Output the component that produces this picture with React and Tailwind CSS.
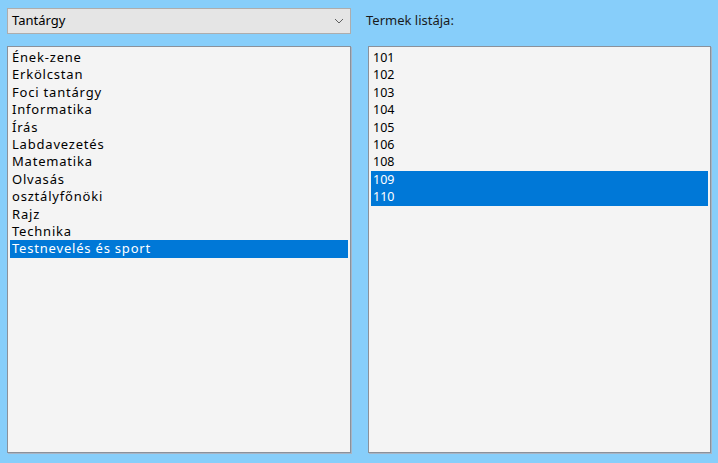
import React from "react";

const subjects = [
  "Ének-zene",
  "Erkölcstan",
  "Foci tantárgy",
  "Informatika",
  "Írás",
  "Labdavezetés",
  "Matematika",
  "Olvasás",
  "osztályfőnöki",
  "Rajz",
  "Technika",
  "Testnevelés és sport",
];

const rooms = ["101", "102", "103", "104", "105", "106", "108", "109", "110"];

function ListBox({ items, selected, wide }) {
  return (
    <div className="h-[407px] bg-[#f4f4f4] border border-[#8a919b] shadow-[1px_1px_0_#a7b4c4] pt-[2px] pl-[2px] pr-[2px]">
      {items.map((item) => (
        <div
          key={item}
          className={clsxLike(
            "h-[17.4px] leading-[17.4px] pl-[2px] whitespace-nowrap",
            wide ? "text-[13px] tracking-[0.8px]" : "text-[12.5px]",
            selected.includes(item) ? "bg-[#0078d7] text-white" : "text-black"
          )}
        >
          {item}
        </div>
      ))}
    </div>
  );
}

function clsxLike(...parts) {
  return parts.filter(Boolean).join(" ");
}

export default function App() {
  return (
    <div
      className="h-[463px] w-[718px] bg-[#87cefa] px-[7px] pt-[8px] text-[13px]"
      style={{ fontFamily: '"Noto Sans", "Open Sans", sans-serif' }}
    >
      <div className="grid grid-cols-[344px_343px] gap-x-[17px]">
        <div className="h-[26px] flex items-center justify-between bg-[#e5e5e5] border border-[#adadad] pl-[4px] pr-[6px] text-black">
          <span>Tantárgy</span>
          <svg width="10" height="6" viewBox="0 0 10 6" fill="none">
            <path d="M1 1l4 4 4-4" stroke="#606060" strokeWidth="1" />
          </svg>
        </div>
        <div className="h-[26px] flex items-center text-[13px] text-[#1a1a1a] -ml-[2px]">
          Termek listája:
        </div>
        <div className="mt-[12px]">
          <ListBox items={subjects} selected={["Testnevelés és sport"]} wide />
        </div>
        <div className="mt-[12px]">
          <ListBox items={rooms} selected={["109", "110"]} />
        </div>
      </div>
    </div>
  );
}
